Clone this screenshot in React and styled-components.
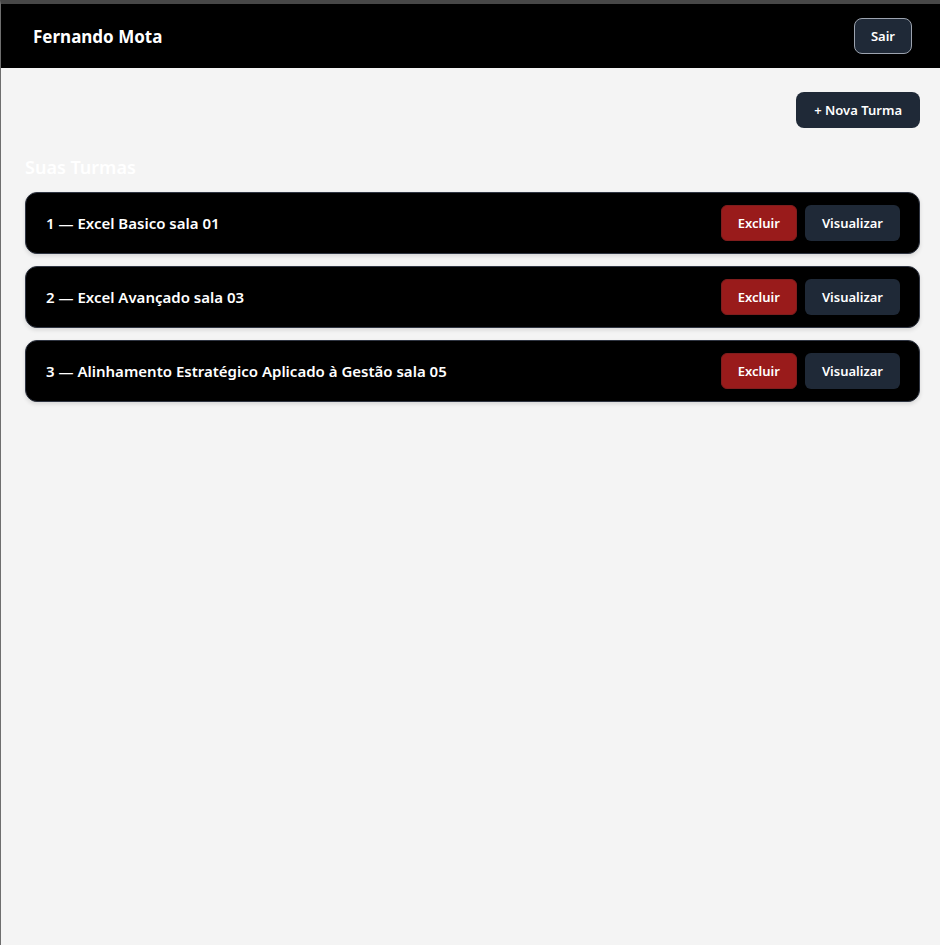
import React from 'react';
import styled, { createGlobalStyle } from 'styled-components';

const GlobalStyle = createGlobalStyle`
  html, body {
    margin: 0;
    padding: 0;
    background: #f4f4f4;
  }
  body {
    font-family: "Noto Sans", "Open Sans", Arial, sans-serif;
  }
  * {
    box-sizing: border-box;
  }
`;

const Frame = styled.div`
  min-height: 945px;
  border-top: 4px solid #474747;
  border-left: 1px solid #6e6e6e;
  background: #f4f4f4;
  display: flex;
  flex-direction: column;
`;

const Header = styled.header`
  height: 64px;
  background: #000;
  display: flex;
  align-items: center;
  justify-content: space-between;
  padding: 0 28px 0 32px;
`;

const Brand = styled.h1`
  margin: 0;
  color: #fff;
  font-size: 17px;
  font-weight: 700;
`;

const Button = styled.button`
  height: 36px;
  padding: 0 ${p => p.$px || 16}px;
  border-radius: ${p => p.$radius || 6}px;
  border: 1px solid ${p => p.$border || 'transparent'};
  background: ${p => p.$bg || '#1f2937'};
  color: #fff;
  font-family: inherit;
  font-size: 13px;
  font-weight: 600;
  cursor: pointer;
  white-space: nowrap;
`;

const Main = styled.main`
  padding: 24px 20px 24px 24px;
  display: flex;
  flex-direction: column;
`;

const Toolbar = styled.div`
  display: flex;
  justify-content: flex-end;
`;

const SectionTitle = styled.h2`
  margin: 27px 0 13px;
  color: #fff;
  font-size: 18px;
  font-weight: 600;
  line-height: 24px;
`;

const List = styled.div`
  display: flex;
  flex-direction: column;
  gap: 12px;
`;

const Card = styled.div`
  height: 62px;
  background: #000;
  border: 1px solid #2f3542;
  border-radius: 12px;
  box-shadow: 0 2px 4px rgba(0, 0, 0, 0.12);
  display: flex;
  align-items: center;
  justify-content: space-between;
  padding: 0 19px 0 20px;
`;

const CardTitle = styled.span`
  color: #fff;
  font-size: 15px;
  font-weight: 600;
`;

const Actions = styled.div`
  display: flex;
  gap: 8px;
`;

const turmas = [
  { id: 1, nome: 'Excel Basico', sala: '01' },
  { id: 2, nome: 'Excel Avançado', sala: '03' },
  { id: 3, nome: 'Alinhamento Estratégico Aplicado à Gestão', sala: '05' },
];

export default function App() {
  return (
    <>
      <GlobalStyle />
      <Frame>
        <Header>
          <Brand>Fernando Mota</Brand>
          <Button $border="#9ca3af" $px={16} $radius={8}>Sair</Button>
        </Header>
        <Main>
          <Toolbar>
            <Button $radius={8} $px={17}>+ Nova Turma</Button>
          </Toolbar>
          <SectionTitle>Suas Turmas</SectionTitle>
          <List>
            {turmas.map(t => (
              <Card key={t.id}>
                <CardTitle>{t.id} — {t.nome} sala {t.sala}</CardTitle>
                <Actions>
                  <Button $bg="#991b1b" $border="#7f1d1d" $px={16}>Excluir</Button>
                  <Button $px={16}>Visualizar</Button>
                </Actions>
              </Card>
            ))}
          </List>
        </Main>
      </Frame>
    </>
  );
}
